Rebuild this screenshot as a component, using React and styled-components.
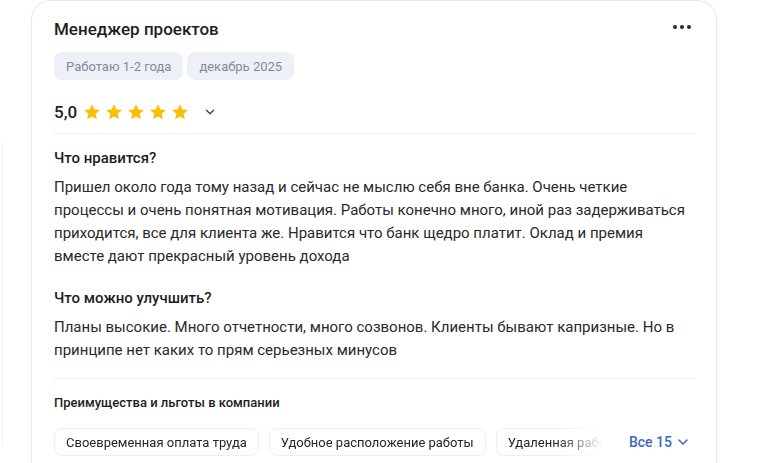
import React from 'react'
import styled, { createGlobalStyle } from 'styled-components'
import { ChevronDown } from 'lucide-react'

const review = {
  position: 'Менеджер проектов',
  tags: ['Работаю 1-2 года', 'декабрь 2025'],
  rating: '5,0',
  likes:
    'Пришел около года тому назад и сейчас не мыслю себя вне банка. Очень четкие процессы и очень понятная мотивация. Работы конечно много, иной раз задерживаться приходится, все для клиента же. Нравится что банк щедро платит. Оклад и премия вместе дают прекрасный уровень дохода',
  improve:
    'Планы высокие. Много отчетности, много созвонов. Клиенты бывают капризные. Но в принципе нет каких то прям серьезных минусов',
  benefits: ['Своевременная оплата труда', 'Удобное расположение работы', 'Удаленная работа']
}

const Star = () => (
  <svg width="18" height="18" viewBox="0 0 24 24">
    <path
      fill="#fdbd00"
      d="M12 1.8l3.05 6.9 7.45.72-5.62 4.98 1.66 7.35L12 17.9l-6.54 3.85 1.66-7.35L1.5 9.42l7.45-.72z"
    />
  </svg>
)

const App = () => {
  return (
    <>
      <GlobalStyle />
      <Page>
        <PrevCard />
        <Card>
          <Header>
            <Title>{review.position}</Title>
            <MoreButton>
              <i />
              <i />
              <i />
            </MoreButton>
          </Header>

          <Tags>
            {review.tags.map(t => (
              <Tag key={t}>{t}</Tag>
            ))}
          </Tags>

          <RatingRow>
            <Score>{review.rating}</Score>
            <Stars>
              {[0, 1, 2, 3, 4].map(i => (
                <Star key={i} />
              ))}
            </Stars>
            <RatingToggle>
              <ChevronDown size={14} strokeWidth={2.4} />
            </RatingToggle>
          </RatingRow>

          <Divider />

          <Section>
            <SectionTitle>Что нравится?</SectionTitle>
            <Body>{review.likes}</Body>
          </Section>

          <Section $gap>
            <SectionTitle>Что можно улучшить?</SectionTitle>
            <Body>{review.improve}</Body>
          </Section>

          <Divider $top={16} />

          <BenefitsTitle>Преимущества и льготы в компании</BenefitsTitle>

          <BenefitsRow>
            <BenefitList>
              {review.benefits.map(b => (
                <Benefit key={b}>{b}</Benefit>
              ))}
            </BenefitList>
            <ShowAll>
              Все 15
              <ChevronDown size={16} strokeWidth={2.4} />
            </ShowAll>
          </BenefitsRow>
        </Card>
      </Page>
    </>
  )
}

export default App

const GlobalStyle = createGlobalStyle`
  html, body {
    margin: 0;
    padding: 0;
    background: #fff;
    overflow: hidden;
  }
  body {
    font-family: Roboto, "Liberation Sans", sans-serif;
    color: #1f1f1f;
  }
`

const Page = styled.div`
  display: flex;
  gap: 28px;
  height: 463px;
  overflow: hidden;
`

const PrevCard = styled.div`
  width: 2px;
  flex-shrink: 0;
  margin-top: 140px;
  height: 305px;
  border-right: 1px solid #f1f2f5;
`

const Card = styled.div`
  width: 686px;
  flex-shrink: 0;
  box-sizing: border-box;
  padding: 16px 22px 0 22px;
  border: 1px solid #e6e8ec;
  border-bottom: none;
  border-radius: 20px 20px 0 0;
  background: #fff;
  height: 480px;
`

const Header = styled.div`
  display: flex;
  align-items: center;
  justify-content: space-between;
  height: 24px;
`

const Title = styled.h2`
  margin: 0;
  font-size: 17px;
  font-weight: 500;
  color: #1e1e1e;
  line-height: 24px;
`

const MoreButton = styled.div`
  display: flex;
  gap: 3px;
  margin-right: 3px;
  margin-top: -4px;

  i {
    width: 4px;
    height: 4px;
    border-radius: 50%;
    background: #2a2a2a;
  }
`

const Tags = styled.div`
  display: flex;
  gap: 4px;
  margin-top: 11px;
`

const Tag = styled.span`
  height: 28px;
  display: flex;
  align-items: center;
  padding: 0 12px;
  border-radius: 8px;
  background: #edf0f6;
  color: #838b99;
  font-size: 13px;
`

const RatingRow = styled.div`
  display: flex;
  align-items: center;
  height: 24px;
  margin-top: 20px;
`

const Score = styled.span`
  font-size: 17px;
  font-weight: 500;
  color: #1e1e1e;
  margin-right: 6px;
`

const Stars = styled.div`
  display: flex;
  gap: 4px;
`

const RatingToggle = styled.span`
  display: flex;
  margin-left: 14px;
  color: #444;
`

const Divider = styled.div`
  height: 1px;
  background: #eff0f3;
  margin-top: ${p => p.$top ?? 9}px;
`

const Section = styled.div`
  margin-top: ${p => (p.$gap ? 20 : 14)}px;
`

const SectionTitle = styled.h3`
  margin: 0;
  font-size: 15px;
  font-weight: 500;
  line-height: 20px;
  color: #1e1e1e;
`

const Body = styled.p`
  margin: 8px 0 0 0;
  font-size: 15px;
  line-height: 23px;
  color: #2a2a2a;
`

const BenefitsTitle = styled.h4`
  margin: 15px 0 0 0;
  font-size: 13px;
  font-weight: 500;
  line-height: 18px;
  color: #1e1e1e;
`

const BenefitsRow = styled.div`
  display: flex;
  align-items: center;
  gap: 22px;
  margin-top: 16px;
`

const BenefitList = styled.div`
  flex: 1;
  display: flex;
  gap: 10px;
  overflow: hidden;
  -webkit-mask-image: linear-gradient(to right, #000 calc(100% - 50px), transparent calc(100% - 4px));
  mask-image: linear-gradient(to right, #000 calc(100% - 50px), transparent calc(100% - 4px));
`

const Benefit = styled.span`
  flex-shrink: 0;
  height: 28px;
  display: flex;
  align-items: center;
  box-sizing: border-box;
  padding: 0 11px;
  border: 1px solid #eceef2;
  border-radius: 8px;
  font-size: 13px;
  color: #262626;
  white-space: nowrap;
`

const ShowAll = styled.button`
  display: flex;
  align-items: center;
  gap: 3px;
  padding: 0 3px 0 0;
  border: none;
  background: none;
  font-family: inherit;
  font-size: 14px;
  font-weight: 500;
  color: #3c69bf;
  cursor: pointer;
`
